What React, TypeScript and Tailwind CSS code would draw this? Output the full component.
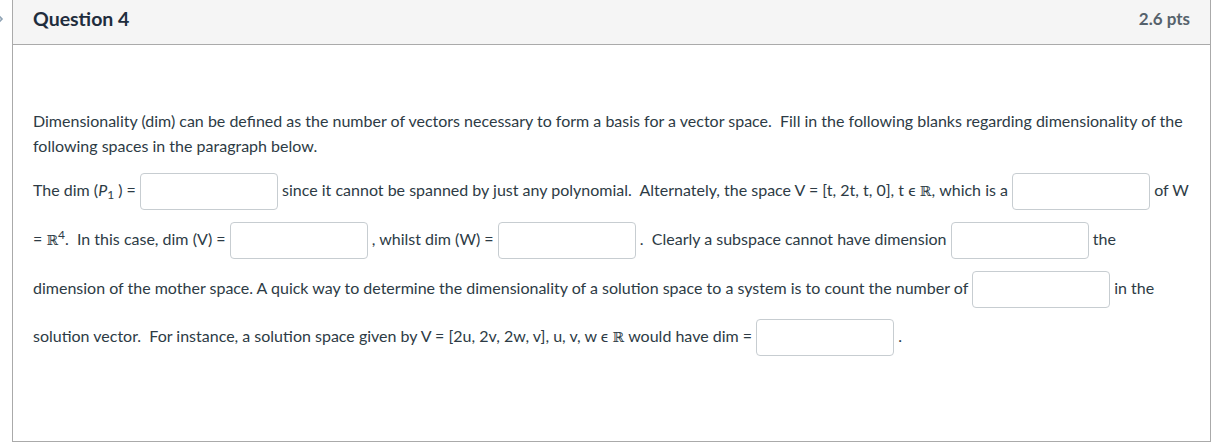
import { FC } from 'react';

const Blank: FC = () => (
    <input
        type='text'
        className='inline-block align-middle w-[138px] h-[37px] rounded-[4px] border border-[#c7cdd1] bg-white px-2 outline-none'
    />
);

const R: FC = () => <span className="font-['DejaVu_Serif',serif] text-[14px]">ℝ</span>;

const App: FC = () => {
    return (
        <div className="flex h-[443px] bg-white font-['Lato','Liberation_Sans',sans-serif] text-[#2d3b45] text-[16px]">
            <div className='w-[12px] overflow-hidden pt-[12px]'>
                <svg viewBox='0 0 10 14' className='w-[10px] h-[14px] -ml-[5px]' fill='none' stroke='#8fa3b5' strokeWidth='1.6'>
                    <path d='M2 2l5 5-5 5' />
                </svg>
            </div>
            <div className='w-[1199px] h-[442px] border border-t-0 border-[#aaaaaa] flex flex-col'>
                <div className='h-[45px] bg-[#f5f5f5] border-b border-[#aaaaaa] flex items-center justify-between pl-[20px] pr-[20px] pb-[6px]'>
                    <h2 className='text-[19.5px] font-bold text-[#1f2d3d]'>Question 4</h2>
                    <span className='text-[17px] font-bold text-[#56626c]'>2.6 pts</span>
                </div>
                <div className='px-[20px] pt-[63px]'>
                    <p className='leading-[25px] mb-[7px]'>
                        Dimensionality (dim) can be defined as the number of vectors necessary to form a basis for a vector space.&nbsp; Fill in the following blanks regarding dimensionality of the following spaces in the paragraph below.
                    </p>
                    <div className='h-[49px] whitespace-nowrap leading-[49px]'>
                        The dim (<i>P</i><sub className='text-[12px]'>1</sub> ) = <Blank /> since it cannot be spanned by just any polynomial.&nbsp; Alternately, the space V = [t, 2t, t, 0], t ϵ <R />, which is a <Blank /> of W
                    </div>
                    <div className='h-[49px] whitespace-nowrap leading-[49px]'>
                        = <R /><sup className='text-[12px]'>4</sup>.&nbsp; In this case, dim (V) = <Blank /> , whilst dim (W) = <Blank /> .&nbsp; Clearly a subspace cannot have dimension <Blank /> the
                    </div>
                    <div className='h-[49px] whitespace-nowrap leading-[49px]'>
                        dimension of the mother space. A quick way to determine the dimensionality of a solution space to a system is to count the number of <Blank /> in the
                    </div>
                    <div className='h-[48px] whitespace-nowrap leading-[48px]'>
                        solution vector.&nbsp; For instance, a solution space given by V = [2u, 2v, 2w, v], u, v, w ϵ <R /> would have dim = <Blank /> .
                    </div>
                </div>
            </div>
        </div>
    );
};

export default App;
